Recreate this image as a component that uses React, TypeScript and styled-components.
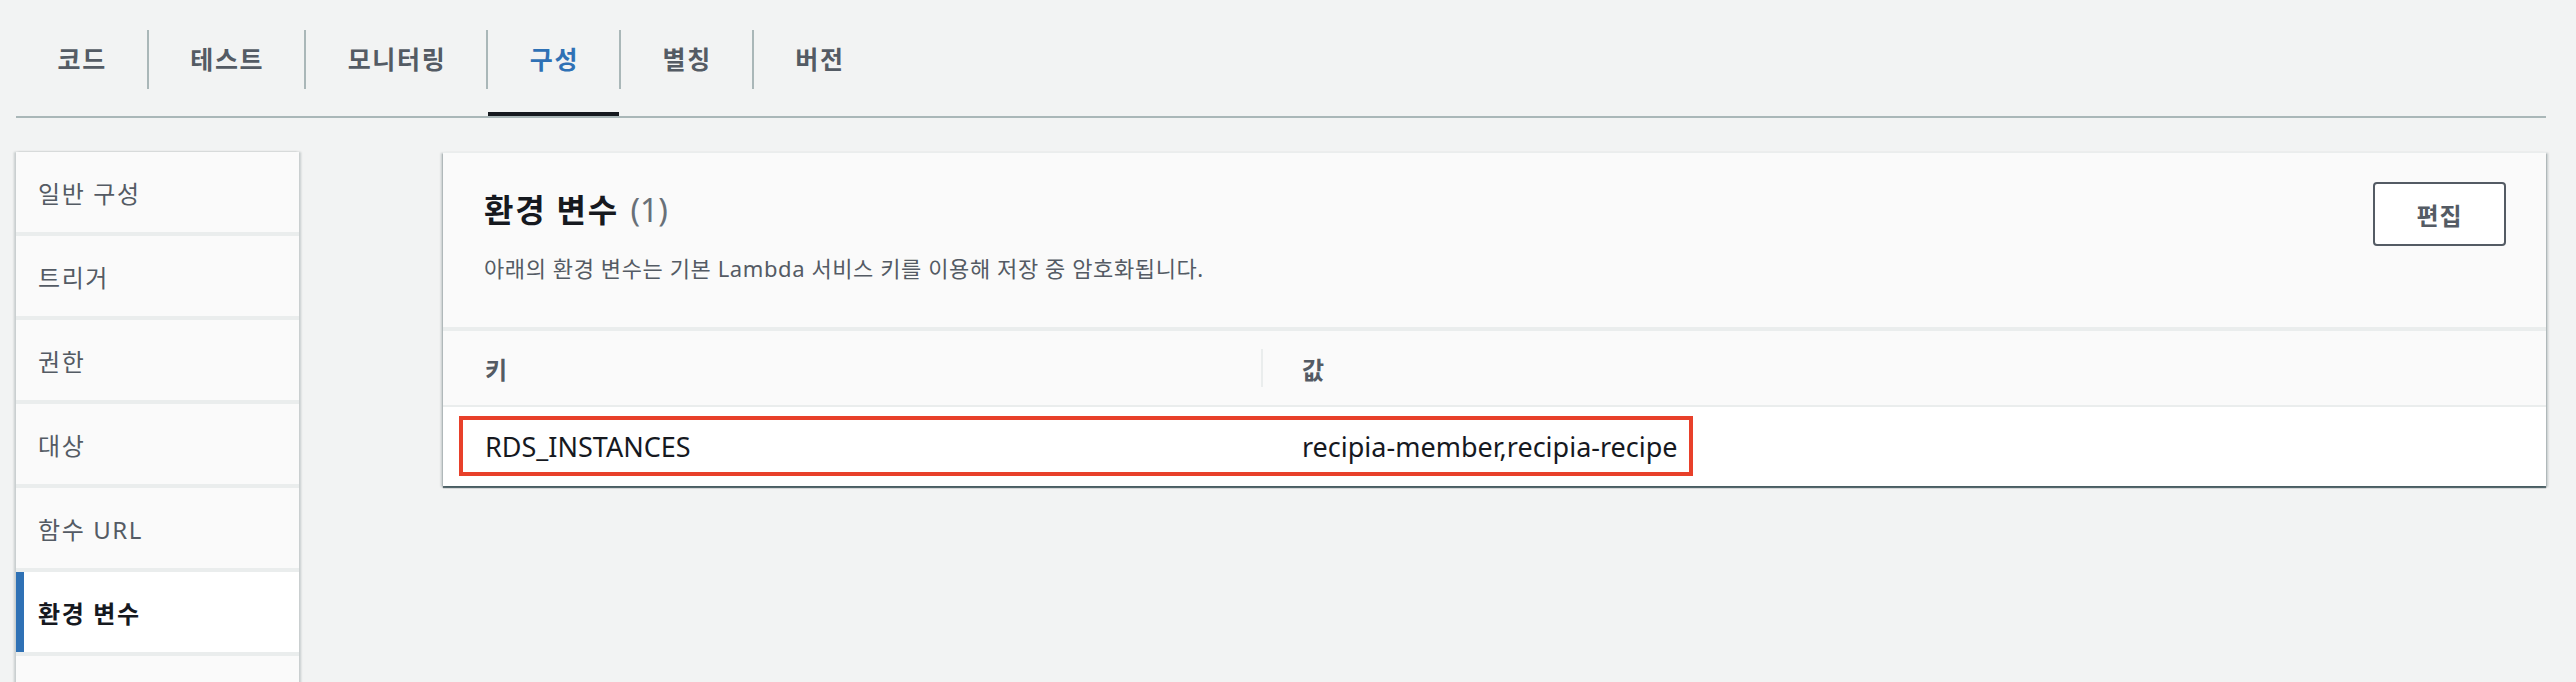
import React from "react";
import styled, { createGlobalStyle } from "styled-components";

const GlobalStyle = createGlobalStyle`
  html, body {
    margin: 0;
    padding: 0;
    background: #f2f3f3;
    overflow: hidden;
  }
  body {
    font-family: "Noto Sans", "Noto Sans CJK KR", sans-serif;
    color: #16191f;
  }
  * { box-sizing: border-box; }
`;

const Page = styled.div`
  padding: 0 30px 0 16px;
`;

const TabList = styled.div`
  display: flex;
  height: 118px;
  border-bottom: 2px solid #aab7b8;
`;

const Tab = styled.div<{ $active?: boolean }>`
  display: flex;
  flex-direction: column;
  height: 116px;
  padding: 30px 41.5px 0;
  border-bottom: 4px solid ${(p) => (p.$active ? "#16191f" : "transparent")};
`;

const TabLabel = styled.span<{ $active?: boolean }>`
  height: 59px;
  line-height: 59px;
  font-size: 25px;
  font-weight: 700;
  letter-spacing: 1.7px;
  margin-right: -1.7px;
  color: ${(p) => (p.$active ? "#2f71b5" : "#545b64")};
  white-space: nowrap;
`;

const TabDivider = styled.span`
  flex-shrink: 0;
  width: 2px;
  height: 59px;
  margin-top: 30px;
  background: #aab7b8;
`;

const Content = styled.div`
  display: flex;
  align-items: flex-start;
  margin-top: 34px;
`;

const Sidebar = styled.nav`
  flex-shrink: 0;
  width: 283px;
  margin-right: 144px;
  display: flex;
  flex-direction: column;
  gap: 4px;
  background: #eaeded;
  box-shadow: 2px 0 2px rgba(0, 28, 36, 0.18), -2px 0 2px rgba(0, 28, 36, 0.18);
`;

const NavItem = styled.div<{ $active?: boolean }>`
  height: 80px;
  display: flex;
  align-items: center;
  padding-left: ${(p) => (p.$active ? "14px" : "22px")};
  border-left: ${(p) => (p.$active ? "8px solid #2f71b5" : "none")};
  background: ${(p) => (p.$active ? "#ffffff" : "#fafafa")};
  font-size: 24px;
  letter-spacing: 1.6px;
  font-weight: ${(p) => (p.$active ? 700 : 400)};
  color: ${(p) => (p.$active ? "#16191f" : "#545b64")};
  white-space: nowrap;
`;

const Panel = styled.section`
  flex: 1;
  background: #ffffff;
  border-top: 1px solid #eaeded;
  box-shadow: 0 2px 1px rgba(0, 28, 36, 0.6), 2px 1px 2px rgba(0, 28, 36, 0.2),
    -2px 1px 2px rgba(0, 28, 36, 0.2);
`;

const PanelHeader = styled.header`
  display: flex;
  justify-content: space-between;
  align-items: flex-start;
  padding: 29px 40px 43px 41px;
  background: #fafafa;
  border-bottom: 4px solid #eaeded;
`;

const TitleBlock = styled.div`
  padding-top: 8px;
`;

const Title = styled.h2`
  margin: 0;
  font-size: 32px;
  line-height: 40px;
  font-weight: 700;
  letter-spacing: 1.8px;
  color: #16191f;
`;

const Count = styled.span`
  margin-left: 3px;
  font-weight: 400;
  letter-spacing: 0;
  color: #687078;
`;

const Description = styled.p`
  margin: 22px 0 0;
  font-size: 22px;
  line-height: 32px;
  letter-spacing: 0.6px;
  color: #545b64;
`;

const EditButton = styled.button`
  width: 133px;
  height: 64px;
  border: 2px solid #545b64;
  border-radius: 4px;
  background: #ffffff;
  font-family: inherit;
  font-size: 24px;
  font-weight: 700;
  letter-spacing: 1px;
  color: #545b64;
  cursor: pointer;
`;

const HeadRow = styled.div`
  display: grid;
  grid-template-columns: 818px 1fr;
  height: 76px;
  background: #fafafa;
  border-bottom: 2px solid #eaeded;
`;

const HeadCell = styled.div<{ $divided?: boolean }>`
  display: flex;
  align-items: center;
  padding-left: ${(p) => (p.$divided ? "41px" : "42px")};
  font-size: 24px;
  font-weight: 700;
  color: #545b64;
  background: ${(p) =>
    p.$divided
      ? "linear-gradient(#eaeded, #eaeded) left center / 2px 38px no-repeat"
      : "none"};
`;

const BodyRow = styled.div`
  position: relative;
  display: grid;
  grid-template-columns: 818px 1fr;
  height: 79px;
  background: #ffffff;
`;

const BodyCell = styled.div<{ $second?: boolean }>`
  display: flex;
  align-items: center;
  padding-left: ${(p) => (p.$second ? "41px" : "42px")};
  font-size: 27px;
  color: #16191f;
  white-space: nowrap;
`;

const Highlight = styled.div`
  position: absolute;
  left: 16px;
  top: 9px;
  width: 1234px;
  height: 60px;
  border: 4px solid #e8402a;
  pointer-events: none;
`;

const tabs = ["코드", "테스트", "모니터링", "구성", "별칭", "버전"];
const navItems = ["일반 구성", "트리거", "권한", "대상", "함수 URL", "환경 변수"];

export default function App() {
  return (
    <>
      <GlobalStyle />
      <Page>
        <TabList>
          {tabs.map((t, i) => (
            <React.Fragment key={t}>
              {i > 0 && <TabDivider />}
              <Tab $active={t === "구성"}>
                <TabLabel $active={t === "구성"}>{t}</TabLabel>
              </Tab>
            </React.Fragment>
          ))}
        </TabList>
        <Content>
          <Sidebar>
            {navItems.map((n) => (
              <NavItem key={n} $active={n === "환경 변수"}>
                {n}
              </NavItem>
            ))}
            <NavItem aria-hidden="true" />
          </Sidebar>
          <Panel>
            <PanelHeader>
              <TitleBlock>
                <Title>
                  환경 변수<Count> (1)</Count>
                </Title>
                <Description>
                  아래의 환경 변수는 기본 Lambda 서비스 키를 이용해 저장 중 암호화됩니다.
                </Description>
              </TitleBlock>
              <EditButton>편집</EditButton>
            </PanelHeader>
            <HeadRow>
              <HeadCell>키</HeadCell>
              <HeadCell $divided>값</HeadCell>
            </HeadRow>
            <BodyRow>
              <BodyCell>RDS_INSTANCES</BodyCell>
              <BodyCell $second>recipia-member,recipia-recipe</BodyCell>
              <Highlight />
            </BodyRow>
          </Panel>
        </Content>
      </Page>
    </>
  );
}
